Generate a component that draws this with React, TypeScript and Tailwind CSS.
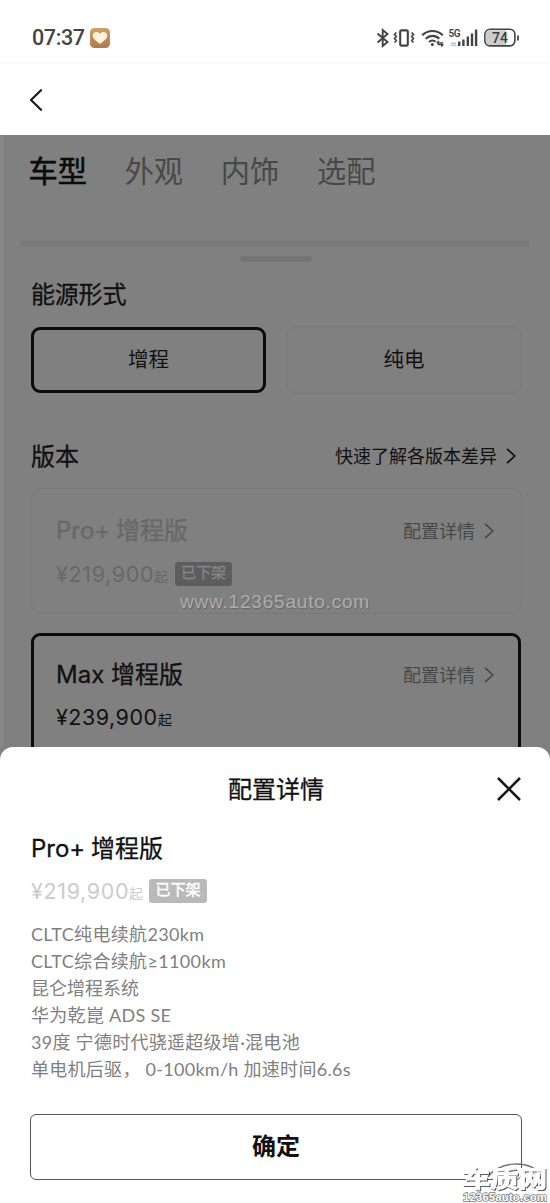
import React from "react";

const CJK = "font-['Inter','Noto_Sans_CJK_SC',sans-serif]";

function Chevron({ className }: { className: string }) {
  return (
    <svg viewBox="0 0 10 16" className={className} fill="none" stroke="currentColor" strokeWidth="1.7">
      <path d="M1 0.8 8.8 8 1 15.2" />
    </svg>
  );
}

function StatusIcons() {
  return (
    <svg width="146" height="24" viewBox="0 0 146 24" fill="none" stroke="#444" strokeWidth="1.9">
      <path d="M2.5 7.5 12.5 16 7.7 20V4l4.8 4L2.5 16.5" strokeWidth="1.9" />
      <rect x="25.2" y="4.4" width="7.6" height="15.2" rx="1.2" strokeWidth="2.1" />
      <path d="M21.3 6.5l-1.8 2 1.8 2-1.8 2 1.8 2-1.8 2M36.7 6.5l1.8 2-1.8 2 1.8 2-1.8 2 1.8 2" strokeWidth="1.7" />
      <path d="M47.2 9.3C53 3.5 62 3.5 67.8 9.3M50.7 12.8c4-3.9 9.8-3.9 13.6 0M54 16c2-1.9 4.8-1.9 6.6-.2" strokeWidth="2.1" />
      <circle cx="57.3" cy="18.6" r="1.5" fill="#444" stroke="none" />
      <path d="M62 17h6M63.8 15l-2 2M62.5 18.6h6M66.2 20.6l2-2" strokeWidth="1.4" />
      <path d="M84.2 20v-4.4M88.4 20v-6.6M92.8 20v-9.5M97 20V7.5M101.1 20V3.5" strokeWidth="2.4" />
      <path d="M76 17.2h5M76 19.3h5" stroke="#c5c5c5" strokeWidth="1.5" />
      <text x="73.5" y="11" fontSize="10" fontWeight="600" fontFamily="Roboto, sans-serif" fill="#444" stroke="none" textLength="12">5G</text>
      <rect x="109.9" y="3.3" width="30" height="16.6" rx="5" fill="#fff" strokeWidth="1.6" />
      <path d="M114.5 4.2H131V19h-16.5q-3.7 0-3.7-3.7V7.9q0-3.7 3.7-3.7Z" fill="#cdcdcd" stroke="none" />
      <path d="M143 9.4v5" strokeWidth="1.8" />
      <text x="117" y="16.5" fontSize="14" fontWeight="500" fontFamily="Roboto, sans-serif" fill="#3c3c3c" stroke="none">74</text>
    </svg>
  );
}

function Name({ latin, latinClass }: { latin: string; latinClass: string }) {
  return (
    <span className="flex h-9 items-center whitespace-pre text-[24px] leading-9 [-webkit-text-stroke:0.3px]">
      <span className={latinClass}>{latin}</span>
      <span>增程版</span>
    </span>
  );
}

function Price({ amount, className }: { amount: string; className: string }) {
  return (
    <span className="flex items-baseline">
      <span className={className}>{amount}</span>
      <span className="text-[14px]">起</span>
    </span>
  );
}

function DetailLink() {
  return (
    <span className="flex items-center text-[18px] text-[#484848]">
      配置详情
      <Chevron className="ml-[9px] h-4 w-[10px]" />
    </span>
  );
}

const specs: { text: string; cls: string }[] = [
  { text: "CLTC纯电续航230km", cls: "tracking-[0.35px]" },
  { text: "CLTC综合续航≥1100km", cls: "tracking-[0.35px]" },
  { text: "昆仑增程系统", cls: "" },
  { text: "华为乾崑 ADS SE", cls: "tracking-[0.3px]" },
  { text: "39度 宁德时代骁遥超级增·混电池", cls: "tracking-[0.28px]" },
  { text: "单电机后驱， 0-100km/h 加速时间6.6s", cls: "tracking-[0.28px]" },
];

export default function App() {
  return (
    <div className={`relative flex h-[1203px] w-[550px] flex-col overflow-hidden bg-white text-[#111] ${CJK}`}>
      <header className="flex h-16 shrink-0 items-center justify-between border-b-2 border-[#fafafa] pl-8 pr-[29px] pt-[14px]">
        <div className="flex items-center gap-[5px]">
          <span className="w-[53px] whitespace-nowrap font-['Roboto',sans-serif] text-[21.5px] font-medium leading-6 tracking-[-0.4px] text-[#444]">07:37</span>
          <svg width="20" height="20" viewBox="0 0 20 20">
            <defs>
              <linearGradient id="badge" x1="0" y1="0" x2="0" y2="1">
                <stop offset="0" stopColor="#d2a066" />
                <stop offset="1" stopColor="#ae794d" />
              </linearGradient>
            </defs>
            <rect width="20" height="20" rx="4.5" fill="url(#badge)" />
            <path d="M10 16C6 13 2.8 10.7 2.8 7.6 2.8 3.7 8 2.8 10 6c2-3.2 7.2-2.3 7.2 1.6 0 3.1-3.2 5.4-7.2 8.4Z" fill="#fff3df" />
          </svg>
        </div>
        <StatusIcons />
      </header>

      <nav className="flex h-[71px] shrink-0 items-center pl-[29px]">
        <svg width="14" height="22" viewBox="0 0 14 22" fill="none" stroke="#1b1b1b" strokeWidth="2.2" strokeLinecap="round" strokeLinejoin="round">
          <path d="M12 1.2 2 11l10 9.8" />
        </svg>
      </nav>

      <main className="flex h-[612px] shrink-0 flex-col overflow-hidden border-l-[3px] border-[#878787] bg-[#808080]">
        <div className="flex h-[70px] shrink-0 items-center gap-[37.8px] pl-[25.5px] pt-[3px] text-[29.2px] text-[#484848]">
          <span className="text-[#0b0b0b] [-webkit-text-stroke:0.6px]">车型</span>
          <span>外观</span>
          <span>内饰</span>
          <span>选配</span>
        </div>
        <div className="ml-[18px] mt-[35px] h-[7px] w-[509px] shrink-0 bg-[#7b7b7b]" />
        <div className="ml-[237px] mt-[9px] h-[6px] w-[72px] shrink-0 rounded-full bg-[#757575]" />
        <h2 className="ml-7 mt-[15px] h-9 shrink-0 text-[24px] leading-9 tracking-[-0.2px] [-webkit-text-stroke:0.3px]">能源形式</h2>
        <div className="ml-7 mt-[13px] flex shrink-0 items-center gap-5 text-[20.5px]">
          <div className="flex h-[66px] w-[235px] items-center justify-center rounded-[9px] border-[3px] border-[#0b0b0b]">增程</div>
          <div className="flex h-[68px] w-[236px] items-center justify-center rounded-[10px] border border-[#787878]">纯电</div>
        </div>
        <div className="ml-7 mr-[34px] mt-[44px] flex h-9 shrink-0 items-center justify-between">
          <h2 className="pt-px text-[24px] leading-9 [-webkit-text-stroke:0.3px]">版本</h2>
          <span className="flex items-center text-[18px]">快速了解各版本差异<Chevron className="ml-[9px] h-4 w-[10px]" /></span>
        </div>
        <section className="ml-7 mt-[14px] flex h-[126px] w-[491px] shrink-0 flex-col rounded-[10px] border border-[#797979] pl-6 pr-[27px] pt-6 text-[#686868]">
          <div className="flex h-9 items-center justify-between">
            <Name latin="Pro+ " latinClass="w-[60px]" />
            <DetailLink />
          </div>
          <div className="mt-[7px] flex h-9 items-center gap-[7px]">
            <Price amount="¥219,900" className="w-[98px] text-[21.5px] tracking-[0.65px]" />
            <span className="flex h-6 w-[57px] items-center justify-center rounded-[3px] bg-[#5d5d5d] pb-0.5 text-[15px] text-[#868686] [-webkit-text-stroke:0.3px]">已下架</span>
          </div>
        </section>
        <section className="ml-7 mt-[19px] flex h-[150px] w-[490px] shrink-0 flex-col rounded-t-[9px] border-[3px] border-[#0b0b0b] pl-[22px] pr-[24px] pt-[21px]">
          <div className="flex h-9 items-center justify-between">
            <Name latin="Max " latinClass="w-[55px]" />
            <DetailLink />
          </div>
          <div className="mt-[6px] flex h-9 items-center">
            <Price amount="¥239,900" className="w-[102px] text-[21.5px] tracking-[0.5px]" />
          </div>
        </section>
      </main>

      <div className="z-10 flex shrink-0 flex-col bg-[#808080]">
        <section className="flex h-[456px] flex-col rounded-t-[13px] bg-white px-[31px]">
          <div className="flex h-[84px] items-center justify-between pl-[197px]">
            <h1 className="pt-px text-[24px] leading-9 [-webkit-text-stroke:0.3px]">配置详情</h1>
            <svg width="24" height="24" viewBox="0 0 24 24" className="-mr-[2px]" fill="none" stroke="#181818" strokeWidth="2.5">
              <path d="M1 1 23 23M23 1 1 23" />
            </svg>
          </div>
          <Name latin="Pro+ " latinClass="w-[60px]" />
          <div className="mt-[6px] flex h-9 items-center gap-[6px] text-[#ccc]">
            <Price amount="¥219,900" className="w-[98px] text-[21.5px] tracking-[0.65px]" />
            <span className="flex h-6 w-[58px] items-center justify-center rounded-[3px] bg-[#b9b9b9] pb-0.5 text-[15px] text-white [-webkit-text-stroke:0.5px]">已下架</span>
          </div>
          <div className="mt-[12px] flex flex-col whitespace-pre font-['Lato','Noto_Sans_CJK_SC',sans-serif] text-[18px] leading-[27px] text-[#808080]">
            {specs.map((s) => <span key={s.text} className={s.cls}>{s.text}</span>)}
          </div>
          <button className="-ml-px mt-[31px] flex h-[66px] w-[492px] items-center justify-center rounded-[6px] border border-[#555] text-[24px] font-bold">确定</button>
        </section>
      </div>

      <div className="absolute left-[180px] top-[592px] z-20 whitespace-nowrap font-['Liberation_Sans',sans-serif] text-[19px] leading-5 tracking-[0.8px] text-[#adadad] [text-shadow:1px_1px_1px_#666]">www.12365auto.com</div>
      <svg className="absolute left-[460px] top-[1154px] z-20" width="90" height="49" viewBox="0 0 90 49">
        <path d="M28 23C38 8 69 4 82 22" fill="none" stroke="#777" strokeWidth="1.5" />
        <g fontWeight="700">
          <g fill="#fff" stroke="#fff" strokeWidth="0.8" className="[filter:drop-shadow(1px_1px_0.5px_#555)]">
            <text x="2" y="33" fontSize="23" fontFamily="'Noto Sans CJK SC', sans-serif" textLength="85" lengthAdjust="spacingAndGlyphs">车质网</text>
          </g>
          <text x="3" y="47" fontSize="11.5" fill="#fff" stroke="#777" strokeWidth="1.4" paintOrder="stroke" fontFamily="'Liberation Sans', sans-serif" textLength="84">12365auto.com</text>
        </g>
      </svg>
    </div>
  );
}
